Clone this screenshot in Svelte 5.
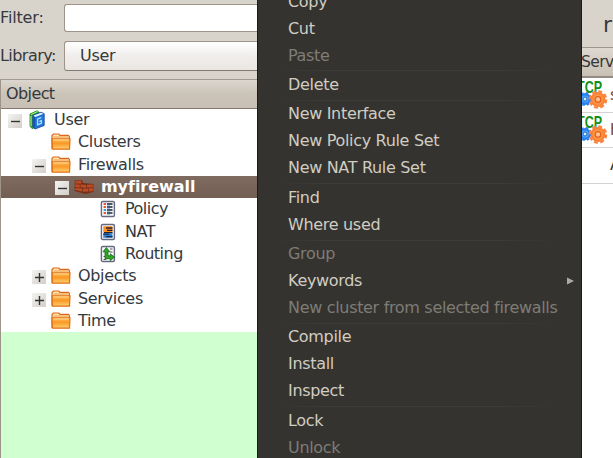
<script>
  const tree = [
    { label: 'User', depth: 0, icon: 'book', toggle: 'minus' },
    { label: 'Clusters', depth: 1, icon: 'folder' },
    { label: 'Firewalls', depth: 1, icon: 'folder', toggle: 'minus' },
    { label: 'myfirewall', depth: 2, icon: 'wall', toggle: 'minus', selected: true },
    { label: 'Policy', depth: 3, icon: 'policy' },
    { label: 'NAT', depth: 3, icon: 'nat' },
    { label: 'Routing', depth: 3, icon: 'routing' },
    { label: 'Objects', depth: 1, icon: 'folder', toggle: 'plus' },
    { label: 'Services', depth: 1, icon: 'folder', toggle: 'plus' },
    { label: 'Time', depth: 1, icon: 'folder' }
  ];
  const groups = [
    [{ t: 'Copy' }, { t: 'Cut' }, { t: 'Paste', off: true }],
    [{ t: 'Delete' }],
    [{ t: 'New Interface' }, { t: 'New Policy Rule Set' }, { t: 'New NAT Rule Set' }],
    [{ t: 'Find' }, { t: 'Where used' }],
    [{ t: 'Group', off: true }, { t: 'Keywords', sub: true }, { t: 'New cluster from selected firewalls', off: true }],
    [{ t: 'Compile' }, { t: 'Install' }, { t: 'Inspect' }],
    [{ t: 'Lock' }, { t: 'Unlock', off: true }]
  ];
  const services = ['s', 'h'];
</script>

{#snippet treeIcon(name)}
  <svg class="ticon" width="20" height="20" viewBox="0 0 20 20">
    {#if name === 'folder'}
      <path d="M1 17V3.6L2.4 2h5.4l1.2 1.4h8.4l1 1V8" fill="#ffe3ac" stroke="#d9691c" stroke-width="1.2" />
      <path d="M2.5 5h15" stroke="#ef9a48" />
      <path d="M1 6.8h18l-.5 10.4h-17z" fill="url(#fold)" stroke="#e07016" stroke-width="1.2" />
      <path d="M2.2 7.9h15.6" stroke="#ffdf9b" />
    {:else if name === 'book'}
      <path d="M3 4 10 .8l2 1.4v14L5 18.5 3 16z" fill="#35a829" stroke="#187d19" stroke-width=".8" />
      <path d="M4 4.5 10.5 1.5M4 6v10" stroke="#b2ef91" />
      <path d="M5.8 5.3 14 2.2l3.2 1.5v11.8L8 19l-2.2-2z" fill="#2376d3" stroke="#103f9d" stroke-width=".8" />
      <path d="M6.5 5.4 14 2.8l2.4 1L8.2 7z" fill="#e5f3ff" />
      <path d="M7.3 7v10.4" stroke="#174ab2" stroke-width="1.6" />
      <path d="M14.4 7.6 10.6 9v5.7l3.8-1.4v-2.6l-2 .7" fill="none" stroke="#a5dcff" stroke-width="1.3" />
    {:else if name === 'wall'}
      <path d="M.6 3.6 8 3l1 3 10.4 1v8l-8 2L.6 14z" fill="#74301a" />
      <path d="M1.2 4.2 7.4 3.6v3l-6.2-.2zM1.2 7.3l4.6.5v2.6l-4.6-.5zM6.5 7.6l5.6.5v2.6l-5.6-.5zM12.9 7.8l6-.4v2.8l-6 .4zM1.2 10.9l6.8.7v2.8l-6.8-1.3zM8.8 11.7l5.6-.2v3.1l-5.6.2zM15.1 11.3l3.8-.4v3.2l-3.8.6z" fill="#bd4b23" />
    {:else}
      <rect x="3.4" y="2.5" width="13" height="15" rx="1.3" fill="#f7f8fb" stroke="#66687f" stroke-width="1.4" />
      {#if name === 'policy'}
        <path d="M5.6 5h2.4M5.6 8h2.4M5.6 14h2.4" stroke="#ef5528" stroke-width="1.8" />
        <path d="M5.6 11h2.4" stroke="#2989ce" stroke-width="1.8" />
        <path d="M9 5h5.5M9 8h5.5M9 11h5.5M9 14h5.5" stroke="#172234" stroke-width="1.6" />
        <path d="M9 6.4h3M9 9.4h3M9 12.4h3M9 15.4h3" stroke="#69a9c8" stroke-width=".8" />
      {:else if name === 'nat'}
        <path d="M5.3 4.2h9.2v6.4H5.3z" fill="#ff8c20" />
        <path d="M8 6h6.5M9 8.4h5.5M6 10.6h8.5" stroke="#22202b" stroke-width="1.3" />
        <path d="M5.3 11.2h9.2v4.6H5.3z" fill="#3382cf" />
        <path d="M5.3 12.2h6M8 14.6h6.5" stroke="#102a59" stroke-width="1.3" />
      {:else}
        <path d="M12 5h2.5M12 8h2.5M5.6 12.5h1.6M5.6 15.5h2.6" stroke="#555" stroke-width="1.2" />
        <path d="m8.4 3.6 3.4 4.2H10v4h2.3V9.8l4.2 3.4-4.2 3.4v-1.9H7V7.8H5z" fill="#2da925" stroke="#126713" stroke-width=".8" />
      {/if}
    {/if}
  </svg>
{/snippet}

<svg class="defs" width="0" height="0">
  <defs>
    <linearGradient id="fold" x2="0" y2="1">
      <stop stop-color="#ffbd5a" /><stop offset=".45" stop-color="#f99a28" /><stop offset="1" stop-color="#ffd070" />
    </linearGradient>
    <radialGradient id="gear"><stop offset=".2" stop-color="#ffad62" /><stop offset="1" stop-color="#f9782a" /></radialGradient>
  </defs>
</svg>

<div class="window">
  <section class="left">
    <div class="form">
      <label class="row filter"><span>Filter:</span><input type="text" /></label>
      <div class="row library"><span>Library:</span><button>User</button></div>
    </div>
    <div class="tree">
      <div class="head">Object</div>
      {#each tree as node}
        <div class="node d{node.depth}" class:selected={node.selected}>
          <span class="toggle" class:shown={node.toggle}>
            {#if node.toggle}
              <svg width="14" height="14" viewBox="0 0 14 14"><path d={node.toggle === 'plus' ? 'M3 7.5h9M7.5 3v9' : 'M3 7.5h9'} stroke="#333" stroke-width="1.4" /></svg>
            {/if}
          </span>
          {@render treeIcon(node.icon)}
          <span class="name">{node.label}</span>
        </div>
      {/each}
    </div>
  </section>

  <section class="right">
    <div class="title">r</div>
    <div class="shead">Serv</div>
    {#each services as s}
      <div class="service">
        <svg width="28" height="34" viewBox="0 0 28 34">
          <text x="-4" y="14.5" textLength="25" lengthAdjust="spacingAndGlyphs">TCP</text>
          <circle cx="4" cy="21" r="4.8" fill="#57a8ff" stroke="#2a80ee" stroke-width="2.4" />
          <circle cx="4" cy="21" r="6.2" fill="none" stroke="#2a80ee" stroke-width="1.6" stroke-dasharray="2.6 2.27" />
          <circle cx="4" cy="21" r="2" fill="#d7efff" stroke="#1969c6" />
          <circle cx="17" cy="21.5" r="7.4" fill="url(#gear)" />
          <circle cx="17" cy="21.5" r="8.2" fill="none" stroke="#f98440" stroke-width="2.2" stroke-dasharray="4 2.44" />
          <circle cx="17" cy="21.5" r="2.8" fill="#ffc08c" stroke="#e8601a" stroke-width="1.3" />
        </svg>
        <span>{s}</span>
      </div>
    {/each}
    <div class="service any"><span>A</span></div>
  </section>

  <nav class="menu">
    {#each groups as group}
      <div class="group">
        {#each group as item}
          <div class="item" class:off={item.off}>
            <span>{item.t}</span>
            {#if item.sub}<svg width="7" height="8" viewBox="0 0 7 8"><path d="M0 .5 7 4 0 7.5z" fill="#aaa9a4" /></svg>{/if}
          </div>
        {/each}
      </div>
    {/each}
  </nav>
</div>

<style>
  :global(body) { overflow: hidden; }
  .defs { position: absolute; }
  .window {
    position: relative;
    display: flex;
    justify-content: space-between;
    width: 613px;
    height: 458px;
    overflow: hidden;
    background: #d9d4cb;
    color: #35393d;
    font: 16px/20px "DejaVu Sans", sans-serif;
    letter-spacing: -0.32px;
  }
  .left { display: flex; flex-direction: column; width: 258px; }
  .form { display: flex; flex-direction: column; gap: 9px; height: 79px; padding-top: 4px; box-sizing: border-box; }
  .row { display: flex; align-items: center; height: 28px; }
  .row span { width: 64px; flex: none; }
  .filter span { letter-spacing: -0.15px; }
  .library { height: 30px; }
  .library span { letter-spacing: -0.55px; }
  input, button {
    flex: 1;
    min-width: 0;
    height: 100%;
    box-sizing: border-box;
    margin: 0;
    border: 1.5px solid #9c9488;
    border-right: 0;
    border-radius: 3px 0 0 3px;
    background: #fff;
    color: inherit;
    font: inherit;
    letter-spacing: inherit;
    text-align: left;
  }
  button { padding: 0 0 1px 15px; border-bottom-color: #827b72; background: linear-gradient(#fff, #f0eeeb 50%, #eae7e3); }
  .tree { flex: 1; border-left: 1px solid #9d958a; background: linear-gradient(#fff 253px, #d0ffd0 253px); }
  .head {
    box-sizing: border-box;
    height: 30px;
    padding: 4px 5px 0;
    border-top: 1px solid #a39b90;
    border-bottom: 1px solid #837b70;
    background: linear-gradient(#dcd6ce, #cbc3b7 50%, #c8c0b4);
    letter-spacing: -0.6px;
  }
  .node { display: flex; align-items: center; height: 22.33px; padding-left: 7px; }
  .d1 { padding-left: 31px; }
  .d2 { padding-left: 54px; }
  .d3 { padding-left: 78px; letter-spacing: -0.5px; }
  .toggle { display: flex; width: 14px; height: 14px; margin-top: 2px; flex: none; }
  .toggle.shown { background: linear-gradient(135deg, #f5f4f2, #d2cec8); }
  .ticon { margin-left: 5px; flex: none; }
  .name { margin-left: 7px; }
  .selected { background: linear-gradient(#806b60, #735e53); color: #fff; font-weight: bold; letter-spacing: -0.05px; }
  .right { display: flex; flex-direction: column; width: 32px; overflow: hidden; background: #fff; }
  .title { height: 47px; flex: none; box-sizing: border-box; padding: 13px 0 0 22px; background: #d9d4cb; font-size: 22px; line-height: 24px; }
  .shead {
    height: 31px;
    flex: none;
    box-sizing: border-box;
    padding-top: 4px;
    border-top: 1px solid #9e968a;
    border-bottom: 2px solid #938c82;
    background: linear-gradient(#ddd8d0, #c8c0b4);
    font-size: 15.5px;
    letter-spacing: -0.6px;
  }
  .service { display: flex; align-items: center; height: 35.2px; box-sizing: border-box; border-bottom: 1px solid #d2d2d2; color: #843c22; }
  .service svg { flex: none; }
  .service span { margin-left: 1px; }
  .service.any span { margin-left: 29px; color: #35393d; }
  .service text { font: bold 16.5px "Liberation Sans", sans-serif; fill: #149018; letter-spacing: 0; }
  .menu {
    position: absolute;
    left: 257px;
    top: -12px;
    width: 325px;
    height: 480px;
    box-sizing: border-box;
    border: 1px solid #1c1b19;
    border-width: 0 1px;
    background: #35332f;
    color: #d0cdc3;
  }
  .group + .group {
    margin-top: 1.4px;
    border-top: 1px solid transparent;
    border-image: linear-gradient(90deg, transparent 5%, #3c3b3b 20%, #3c3b3b 75%, transparent 93%) 1;
  }
  .item { display: flex; align-items: center; justify-content: space-between; height: 27px; padding: 0 7px 0 30px; white-space: nowrap; }
  .off { color: #7e7c76; }
</style>
